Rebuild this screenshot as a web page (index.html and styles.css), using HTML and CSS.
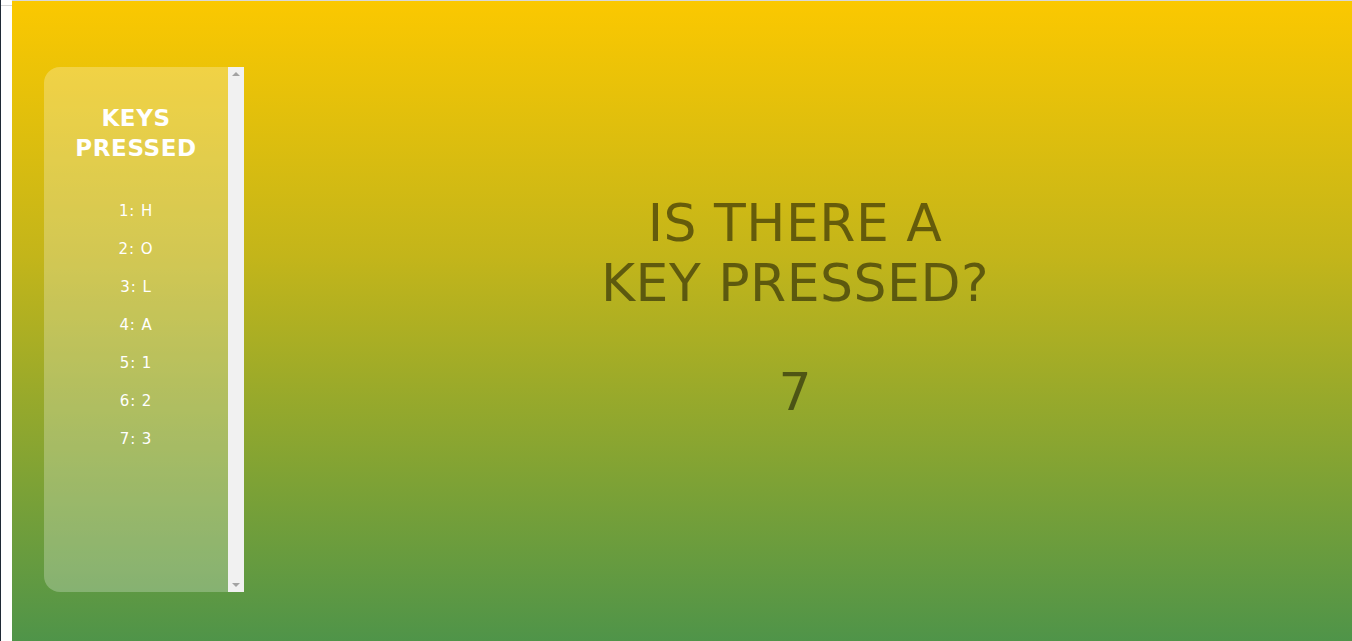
FILE: index.html
```html
<!DOCTYPE html>
<html lang="en">
<head>
<meta charset="utf-8">
<title>Keys Pressed</title>
<link rel="stylesheet" href="styles.css">
</head>
<body>
<div class="frame">
  <div class="gutter"><div class="gutter-line"></div></div>
  <div class="stage">
    <aside class="panel">
      <div class="panel-body">
        <h2 class="panel-title">KEYS<br>PRESSED</h2>
        <ul class="key-list">
          <li>1: H</li>
          <li>2: O</li>
          <li>3: L</li>
          <li>4: A</li>
          <li>5: 1</li>
          <li>6: 2</li>
          <li>7: 3</li>
        </ul>
      </div>
      <div class="scrollbar">
        <span class="arrow arrow-up"></span>
        <span class="arrow arrow-down"></span>
      </div>
    </aside>
    <main class="main">
      <h1 class="question">IS THERE A<br>KEY PRESSED?</h1>
      <div class="count">7</div>
    </main>
  </div>
</div>
</body>
</html>
```

FILE: styles.css
```css
html, body {
  margin: 0;
  padding: 0;
  height: 100%;
}
body {
  font-family: "DejaVu Sans", Verdana, sans-serif;
  background: #ffffff;
  overflow: hidden;
}
.frame {
  display: flex;
  height: 641px;
}
.gutter {
  flex: none;
  width: 12px;
  box-sizing: border-box;
  background: #ffffff;
  border-left: 1px solid #1f2a36;
  padding-top: 5px;
}
.gutter-line {
  height: 1px;
  background: #d6d6d6;
}
.stage {
  flex: 1;
  display: flex;
  border-top: 1px solid #d8d8d8;
  background: linear-gradient(to bottom, #fbc800 0%, #c3b51a 40%, #7ea235 75%, #4f9449 100%);
}
.panel {
  flex: none;
  display: flex;
  width: 200px;
  height: 525px;
  margin: 66px 0 0 32px;
}
.panel-body {
  flex: 1;
  background: rgba(255, 255, 255, 0.25);
  border-radius: 16px 0 0 16px;
  text-align: center;
  color: #ffffff;
  padding-top: 36px;
}
.panel-title {
  margin: 0;
  font-size: 23px;
  line-height: 30px;
  font-weight: bold;
  letter-spacing: 0.6px;
}
.key-list {
  list-style: none;
  margin: 29px 0 0;
  padding: 0;
  font-size: 15px;
  line-height: 38px;
  letter-spacing: 0.9px;
}
.scrollbar {
  flex: none;
  width: 16px;
  background: #f1f1f1;
  display: flex;
  flex-direction: column;
  justify-content: space-between;
  align-items: center;
  padding: 5px 0;
}
.arrow {
  width: 0;
  height: 0;
  border-left: 4px solid transparent;
  border-right: 4px solid transparent;
}
.arrow-up {
  border-bottom: 4px solid #a3a3a3;
}
.arrow-down {
  border-top: 4px solid #a3a3a3;
}
.main {
  flex: 1;
  text-align: center;
  padding: 192px 6px 0 0;
  color: rgba(0, 0, 0, 0.5);
}
.question {
  margin: 0;
  font-size: 52px;
  line-height: 60px;
  font-weight: normal;
  letter-spacing: 0.5px;
}
.count {
  margin-top: 49px;
  font-size: 52px;
  line-height: 60px;
}
```
